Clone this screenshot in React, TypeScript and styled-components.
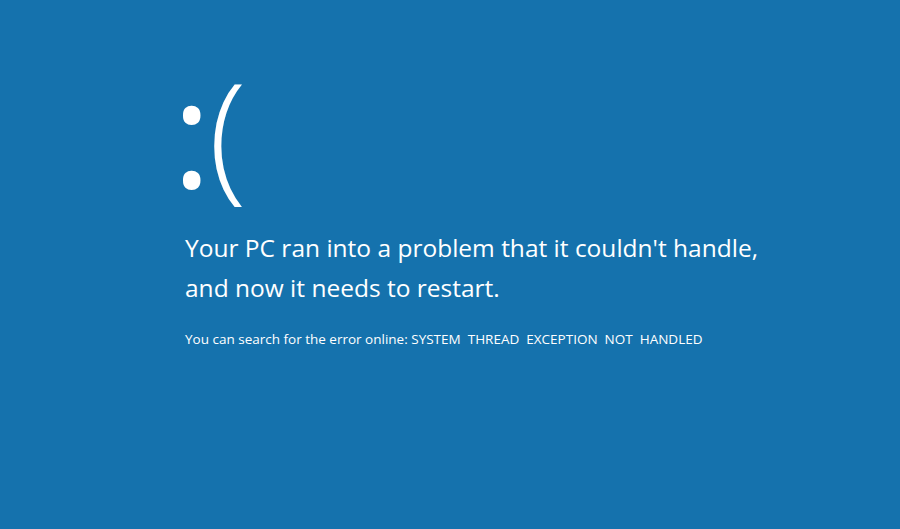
import React from "react";
import styled, { createGlobalStyle } from "styled-components";

const Global = createGlobalStyle`
  html, body { margin: 0; padding: 0; background: #1572ad; }
  body { width: 900px; height: 529px; overflow: hidden; }
`;

const Screen = styled.main`
  width: 900px;
  height: 529px;
  box-sizing: border-box;
  background: #1572ad;
  color: #ffffff;
  font-family: "Open Sans", "Noto Sans", sans-serif;
  padding: 55px 0 0 185px;
  display: flex;
  flex-direction: column;
`;

const Face = styled.div`
  margin-left: -13px;
  font-size: 140px;
  line-height: 150px;
  font-weight: 300;
  height: 150px;
  margin-bottom: 23px;
  white-space: nowrap;
`;

const Eyes = styled.span`
  font-size: 150px;
  font-weight: 500;
  margin-right: -3px;
  vertical-align: -3px;
`;

const Headline = styled.p`
  margin: 0;
  font-size: 24.5px;
  line-height: 40px;
  font-weight: 400;
`;

const Detail = styled.p`
  margin: 22px 0 0;
  font-size: 13.5px;
  line-height: 18px;
`;

export default function App() {
  return (
    <>
      <Global />
      <Screen>
        <Face>
          <Eyes>:</Eyes>(
        </Face>
        <Headline>
          Your PC ran into a problem that it couldn't handle,
          <br />
          and now it needs to restart.
        </Headline>
        <Detail>
          You can search for the error online: SYSTEM&nbsp; THREAD&nbsp; EXCEPTION&nbsp; NOT&nbsp; HANDLED
        </Detail>
      </Screen>
    </>
  );
}
